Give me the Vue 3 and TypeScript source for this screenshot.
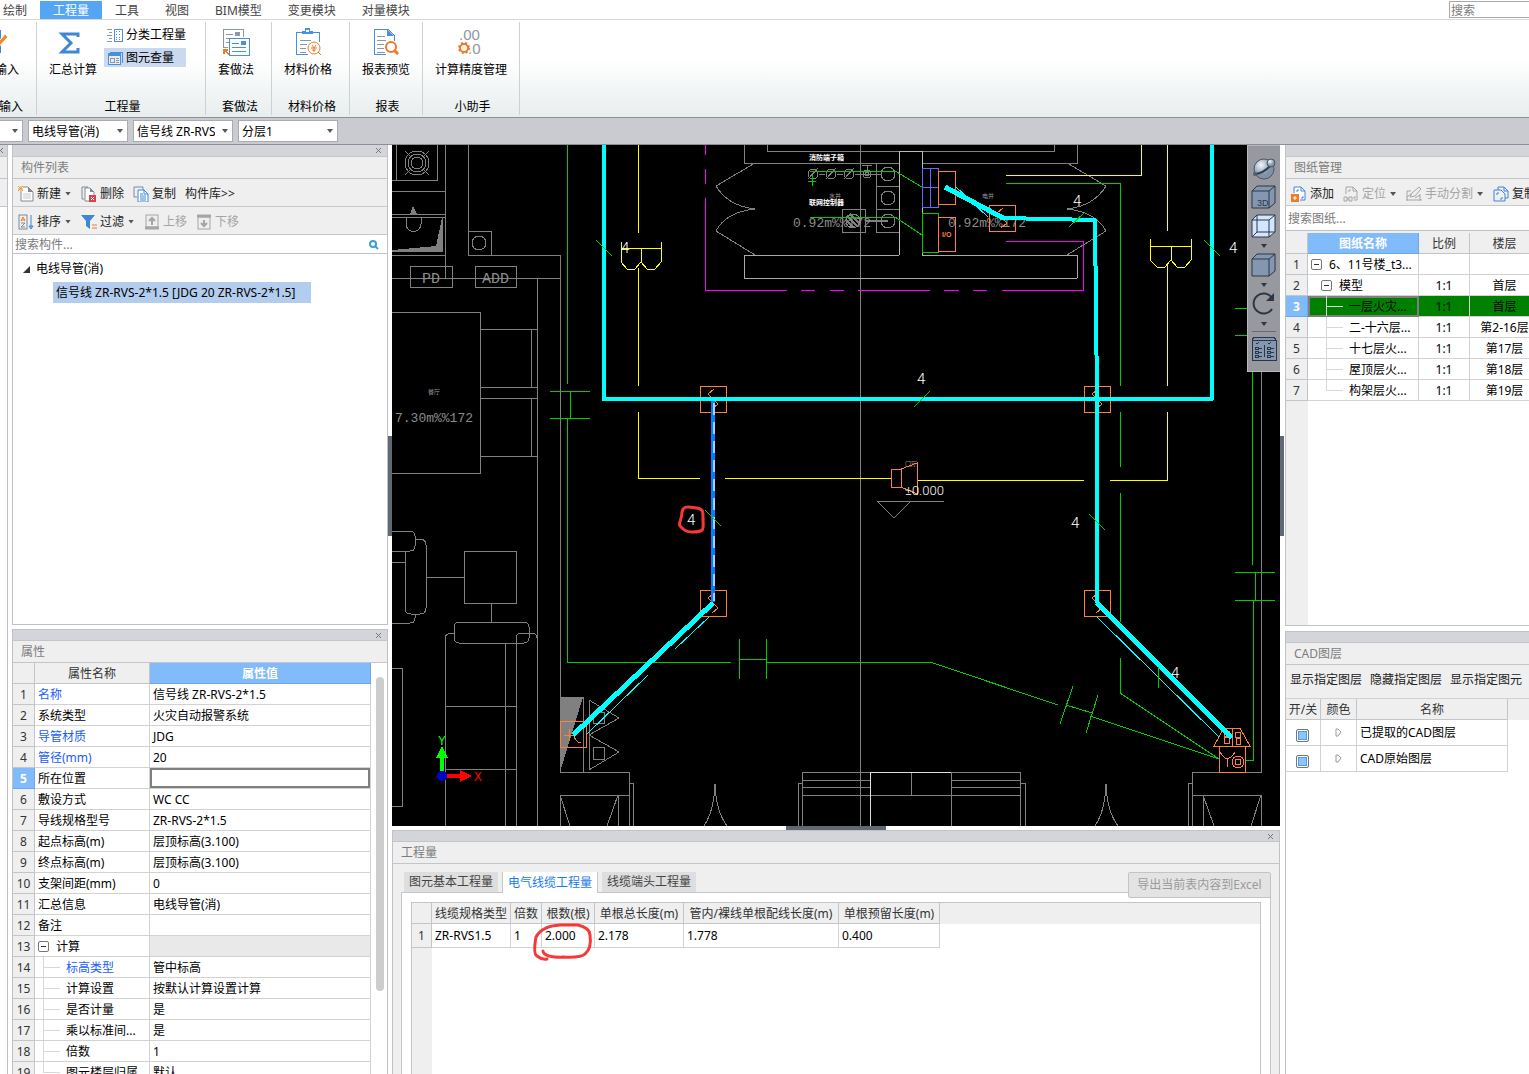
<script setup lang="ts">
import { ref } from 'vue'

interface PropertyRow {
  name: string
  value: string
  kind?: 'group' | 'leaf'
  blue?: boolean
}
interface DrawingRow {
  name: string
  scale: string
  floor: string
  depth: number
}

const menus = ['绘制', '工程量', '工具', '视图', 'BIM模型', '变更模块', '对量模块']
const activeMenu = ref('工程量')

const selectors = [
  { label: '构件类型', value: '电线导管(消)' },
  { label: '构件', value: '信号线 ZR-RVS-2*1.5' },
  { label: '分层', value: '分层1' },
]

const properties: PropertyRow[] = [
  { name: '名称', value: '信号线 ZR-RVS-2*1.5', blue: true },
  { name: '系统类型', value: '火灾自动报警系统' },
  { name: '导管材质', value: 'JDG', blue: true },
  { name: '管径(mm)', value: '20', blue: true },
  { name: '所在位置', value: '' },
  { name: '敷设方式', value: 'WC CC' },
  { name: '导线规格型号', value: 'ZR-RVS-2*1.5' },
  { name: '起点标高(m)', value: '层顶标高(3.100)' },
  { name: '终点标高(m)', value: '层顶标高(3.100)' },
  { name: '支架间距(mm)', value: '0' },
  { name: '汇总信息', value: '电线导管(消)' },
  { name: '备注', value: '' },
  { name: '计算', value: '', kind: 'group' },
  { name: '标高类型', value: '管中标高', kind: 'leaf', blue: true },
  { name: '计算设置', value: '按默认计算设置计算', kind: 'leaf' },
  { name: '是否计量', value: '是', kind: 'leaf' },
  { name: '乘以标准间...', value: '是', kind: 'leaf' },
  { name: '倍数', value: '1', kind: 'leaf' },
  { name: '图元楼层归属', value: '默认', kind: 'leaf' },
]
const selectedProperty = 4
const location = ref('')

const drawings: DrawingRow[] = [
  { name: '6、11号楼_t3...', scale: '', floor: '', depth: 0 },
  { name: '模型', scale: '1:1', floor: '首层', depth: 1 },
  { name: '一层火灾...', scale: '1:1', floor: '首层', depth: 2 },
  { name: '二-十六层...', scale: '1:1', floor: '第2-16层', depth: 2 },
  { name: '十七层火...', scale: '1:1', floor: '第17层', depth: 2 },
  { name: '屋顶层火...', scale: '1:1', floor: '第18层', depth: 2 },
  { name: '构架层火...', scale: '1:1', floor: '第19层', depth: 2 },
]

const layers = ['已提取的CAD图层', 'CAD原始图层']

const tabs = ['图元基本工程量', '电气线缆工程量', '线缆端头工程量']
const activeTab = ref('电气线缆工程量')
const quantityHeads = ['线缆规格类型', '倍数', '根数(根)', '单根总长度(m)', '管内/裸线单根配线长度(m)', '单根预留长度(m)']
const quantityRow = ['ZR-RVS1.5', '1', '2.000', '2.178', '1.778', '0.400']

// centres of the smoke detectors and anchors of the wire counts on the plan
const detectors = [[1002, 218], [713, 399], [1097, 399], [713, 603], [1097, 603]]
const wireCounts = [[1073, 206], [1229, 253], [621, 253], [917, 384], [687, 525], [1071, 528], [1171, 678]]
</script>

<template>
  <div class="app">
    <header class="menubar">
      <nav>
        <button v-for="m in menus" :key="m" :class="{ active: m === activeMenu }" @click="activeMenu = m">{{ m }}</button>
      </nav>
      <input class="menu-search" type="text" placeholder="搜索" aria-label="搜索" />
    </header>

    <div class="ribbon">
      <section class="group g-cut">
        <div class="group-body">
          <button class="big">
            <svg width="28" height="28" viewBox="0 0 28 28" fill="none"><path d="M4 3h15v21H4zM4 8h15" stroke="#3f87d6" stroke-width="2" /><path d="M4 3h15v4H4z" fill="#3f87d6" /><path d="M7 14h9M7 19h9" stroke="#3f87d6" /><path d="M13 19l2 3 12-13-3-3z" fill="#f08a24" stroke="#fff" /></svg>
            <span>表格输入</span>
          </button>
        </div>
        <div class="caption">表格输入</div>
      </section>
      <section class="group g-quantity">
        <div class="group-body">
          <button class="big">
            <svg width="28" height="28" viewBox="0 0 28 28" fill="none"><path d="M21 9V6H5l9 9-9 9h16v-4" stroke="#3f87d6" stroke-width="3" /></svg>
            <span>汇总计算</span>
          </button>
          <div class="small-list">
            <button class="small">
              <svg width="16" height="14" viewBox="0 0 16 14" shape-rendering="crispEdges" fill="none"><path d="M0 1h5M2 4h3M0 7h5M2 10h3M0 13h5" stroke="#8b97a5" /><rect x="7" y="1" width="8" height="12" stroke="#4a8fdc" /><path d="M9 3h1M12 3h1M9 6h1M12 6h1M9 9h1M12 9h1M9 11h1M12 11h1" stroke="#4a8fdc" /></svg>
              <span>分类工程量</span>
            </button>
            <button class="small on">
              <svg width="16" height="14" viewBox="0 0 16 14" shape-rendering="crispEdges" fill="none"><path d="M3 1h12v11" stroke="#4a8fdc" /><rect x="1" y="2" width="12" height="11" fill="#e6eef9" stroke="#4a8fdc" /><path d="M1 3h12" stroke="#4a8fdc" stroke-width="3" /><rect x="3" y="7" width="4" height="4" stroke="#8b97a5" /><path d="M9 7h3M9 9h3M9 11h3" stroke="#8b97a5" /></svg>
              <span>图元查量</span>
            </button>
          </div>
        </div>
        <div class="caption">工程量</div>
      </section>
      <section class="group g-method">
        <div class="group-body">
          <button class="big">
            <svg width="28" height="28" viewBox="0 0 28 28" fill="none" shape-rendering="crispEdges"><path d="M6 19H1V1h20v8" stroke="#8b97a5" /><path d="M4 6h7M4 10h4M4 14h3" stroke="#8b97a5" /><rect x="13" y="4" width="5" height="4" fill="#8b97a5" /><rect x="7" y="10" width="20" height="17" fill="#fff" stroke="#4a8fdc" /><path d="M10 15h7M10 19h14M10 23h14" stroke="#4a8fdc" /><rect x="19" y="13" width="5" height="4" fill="#4a8fdc" /><path d="M1 21h5v2H4l3 3-1 1-3-3v2H1z" fill="#f07a28" /></svg>
            <span>套做法</span>
          </button>
        </div>
        <div class="caption">套做法</div>
      </section>
      <section class="group g-price">
        <div class="group-body">
          <button class="big">
            <svg width="28" height="28" viewBox="0 0 28 28" fill="none"><g shape-rendering="crispEdges"><path d="M8 4H2v22h12M19 4h6v10" stroke="#4a8fdc" /><path d="M8 6h11V3h-3V0h-5v3H8z" fill="#4a8fdc" /><rect x="12" y="2" width="3" height="2" fill="#fff" /><path d="M6 12h11M6 16h7M6 20h6M6 24h6" stroke="#8b97a5" /></g><circle cx="20" cy="20" r="6" fill="#fff" stroke="#f07a28" /><path d="M18 17l2 3 2-3M20 20v4M17 20h6M18 22h4M24 24l3 3" stroke="#f07a28" /></svg>
            <span>材料价格</span>
          </button>
        </div>
        <div class="caption">材料价格</div>
      </section>
      <section class="group g-report">
        <div class="group-body">
          <button class="big">
            <svg width="28" height="28" viewBox="0 0 28 28" fill="none"><path d="M14 26H2V1h14l6 6v6" stroke="#4a8fdc" shape-rendering="crispEdges" /><path d="M15 1l7 7h-7z" fill="#4a8fdc" /><path d="M5 8h8M5 12h9M5 16h7M5 20h7M5 24h8" stroke="#8b97a5" shape-rendering="crispEdges" /><circle cx="19" cy="19" r="5" fill="#fff" stroke="#f07a28" stroke-width="2" /><path d="M22 22l4 4" stroke="#f07a28" stroke-width="3" /></svg>
            <span>报表预览</span>
          </button>
        </div>
        <div class="caption">报表</div>
      </section>
      <section class="group g-helper">
        <div class="group-body">
          <button class="big">
            <svg width="28" height="28" viewBox="0 0 28 28" fill="none"><text x="2" y="12" class="decimal">.00</text><text x="11" y="26" class="decimal">.0</text><circle cx="7" cy="20" r="4" stroke="#f07a28" stroke-width="2" /><circle cx="7" cy="20" r="5" stroke="#f07a28" stroke-width="2" stroke-dasharray="2 2" /></svg>
            <span>计算精度管理</span>
          </button>
        </div>
        <div class="caption">小助手</div>
      </section>
    </div>

    <div class="selectors">
      <label class="combo combo-cut"><select aria-label="楼层"><option></option></select><i class="caret"></i></label>
      <label v-for="s in selectors" :key="s.label" class="combo">
        <select :aria-label="s.label"><option>{{ s.value }}</option></select><i class="caret"></i>
      </label>
    </div>

    <main class="workspace">
      <aside class="sliver">
        <div class="strip"><button class="close" aria-label="关闭"><svg width="7" height="7" viewBox="0 0 7 7"><path d="M1 1l5 5M6 1L1 6" stroke="#777" stroke-width="1" /></svg></button></div>
        <div class="sliver-title"></div>
        <div class="sliver-bar"></div>
      </aside>

      <aside class="left">
        <section class="panel components">
          <div class="strip"><button class="close" aria-label="关闭"><svg width="7" height="7" viewBox="0 0 7 7"><path d="M1 1l5 5M6 1L1 6" stroke="#777" stroke-width="1" /></svg></button></div>
          <h2>构件列表</h2>
          <div class="toolbar">
            <button><svg width="16" height="16" viewBox="0 0 16 16" fill="none"><path d="M5 1h5l5 5v9H3V5" fill="#fff" stroke="#7f8b96" /><path d="M10 1l5 5h-5z" fill="#7f8b96" /><path d="M5 8h8M5 10h8M5 12h8" stroke="#c5cad0" /><path d="M0 0l5 5M5 0L0 5M3 0v5M0 3h5" stroke="#f39a2b" /></svg>新建<i class="caret"></i></button>
            <button><svg width="16" height="16" viewBox="0 0 16 16" fill="none"><path d="M3 13H1V1h6" stroke="#7f8b96" /><path d="M8 15H4V2h5l4 4v3" stroke="#7f8b96" fill="#fff" /><path d="M9 2l4 4H9z" fill="#7f8b96" /><rect x="8" y="9" width="7" height="7" fill="#d9434e" /><path d="M10 11l3 3M13 11l-3 3" stroke="#fff" /></svg>删除</button>
            <button><svg width="16" height="16" viewBox="0 0 16 16" fill="none"><path d="M4 11H1V1h9v3" stroke="#7f8b96" /><path d="M5 4h6l4 4v8H5z" stroke="#3f87d6" fill="#fff" /><path d="M11 4l4 4h-4zM7 8h3M7 10h6M7 12h6M7 14h6" stroke="#3f87d6" /></svg>复制</button>
            <button>构件库&gt;&gt;</button>
          </div>
          <div class="toolbar">
            <button><svg width="16" height="16" viewBox="0 0 16 16" fill="none"><rect x="1" y="1" width="8" height="14" stroke="#7f8b96" /><path d="M3 7l2-4 2 4M3 6h4" stroke="#f07a28" /><path d="M3 9h4l-4 4h4" stroke="#7f8b96" /><path d="M13 1v13M11 12l2 3 2-3z" stroke="#3f87d6" /></svg>排序<i class="caret"></i></button>
            <button><svg width="16" height="16" viewBox="0 0 16 16"><path d="M0 1h14L9 7v8l-4-3V7z" fill="#3f87d6" /><path d="M11 11h5M11 14h5" stroke="#f07a28" stroke-width="1" /></svg>过滤<i class="caret"></i></button>
            <button class="off" disabled><svg width="16" height="16" viewBox="0 0 16 16"><rect x="2" y="1" width="12" height="12" fill="none" stroke="#a5a5a5" /><path d="M1 14h14" stroke="#a5a5a5" stroke-width="3" /><path d="M8 11V5M5 7l3-3 3 3" fill="none" stroke="#a5a5a5" stroke-width="2" /></svg>上移</button>
            <button class="off" disabled><svg width="16" height="16" viewBox="0 0 16 16"><rect x="2" y="3" width="12" height="12" fill="none" stroke="#a5a5a5" /><path d="M1 2h14" stroke="#a5a5a5" stroke-width="3" /><path d="M8 6v6M5 9l3 3 3-3" fill="none" stroke="#a5a5a5" stroke-width="2" /></svg>下移</button>
          </div>
          <div class="search">
            <input type="text" placeholder="搜索构件..." aria-label="搜索构件" />
            <svg width="12" height="12" viewBox="0 0 12 12"><circle cx="5" cy="5" r="3" fill="none" stroke="#3aa0dc" stroke-width="2" /><path d="M7 7l3 3" stroke="#3aa0dc" stroke-width="2" /></svg>
          </div>
          <div class="tree">
            <div class="tree-root"><svg width="7" height="7" viewBox="0 0 7 7"><path d="M7 0v7H0z" fill="#333" /></svg>电线导管(消)</div>
            <div class="tree-item">信号线 ZR-RVS-2*1.5 [JDG 20 ZR-RVS-2*1.5]</div>
          </div>
        </section>

        <section class="panel props">
          <div class="strip"><button class="close" aria-label="关闭"><svg width="7" height="7" viewBox="0 0 7 7"><path d="M1 1l5 5M6 1L1 6" stroke="#777" stroke-width="1" /></svg></button></div>
          <h2>属性</h2>
          <div class="props-body">
            <table>
              <colgroup><col class="w-num" /><col class="w-name" /><col /></colgroup>
              <thead><tr><th></th><th>属性名称</th><th class="sel">属性值</th></tr></thead>
              <tbody>
                <tr v-for="(p, i) in properties" :key="p.name">
                  <th :class="{ sel: i === selectedProperty }">{{ i + 1 }}</th>
                  <td class="tree-cell" :class="{ blue: p.blue }">
                    <div class="cell">
                      <i v-if="p.kind === 'group'" class="minus"></i>
                      <i v-if="p.kind === 'leaf'" class="guide" :class="{ last: i === properties.length - 1 }"></i>
                      <span>{{ p.name }}</span>
                    </div>
                  </td>
                  <td v-if="i === selectedProperty" class="editing"><input v-model="location" type="text" aria-label="所在位置" /></td>
                  <td v-else :class="{ shade: p.kind === 'group' }">{{ p.value }}</td>
                </tr>
              </tbody>
            </table>
            <div class="scroll"><div class="thumb"></div></div>
          </div>
        </section>
      </aside>

      <div class="splitter"><i class="grip"></i></div>

      <div class="center">
        <div class="canvas">
          <svg class="plan" viewBox="392 145 888 681" preserveAspectRatio="xMinYMin slice" fill="none" shape-rendering="crispEdges">
            <!-- walls, furniture and fittings -->
            <g stroke="#808080">
              <path d="M396 145v35M437 145v36M392 180h45M392 191h53M445 145v133M392 214h53M392 217h53M442 218v34M392 255h53M468 145v110h92v517M468 231h23v24M392 278h168M537 278v548" />
              <path d="M410 266h42v21h-42zM475 266h41v21h-41z" />
              <path d="M392 312h88v161h-88M480 329h57M480 387h57M531 329v58M480 398h57M480 456h57M531 398v58" />
              <path d="M406 218v6a7 7 0 0 0 15 0v-6" />
              <circle cx="417" cy="163" r="12" /><circle cx="417" cy="163" r="9" /><circle cx="417" cy="163" r="6" />
              <path d="M405 151l6 6M429 151l-6 6M405 175l6-6M429 175l-6-6" />
              <circle cx="479" cy="243" r="7" />
              <path d="M860 145v681" />
              <path d="M744 145v18h155M922 163h155v-18M767 145v6h287v-6" />
              <path d="M744 255h155M922 255h155M744 278h333M744 255v23M1077 255v23" stroke="#aaa" />
              <path d="M899 255V151h23v104" stroke="#bbb" />
              <path d="M755 163l-39 23Q728 206 755 209Q726 212 716 231l39 24M1067 163l39 23Q1094 206 1067 209Q1096 212 1106 231l-39 24" />
              <path d="M876 163v69h23M876 186h23M876 209h23M842 209h23v23h-23z" />
              <circle cx="888" cy="174" r="7" /><circle cx="888" cy="198" r="7" /><circle cx="888" cy="221" r="7" />
              <circle cx="813" cy="174" r="5" /><circle cx="831" cy="174" r="5" /><circle cx="849" cy="174" r="5" />
              <path d="M808 179l10-11M826 179l10-11M844 179l10-11M819 174h6M837 174h6M855 174h26M867 165v6M862 165h10" />
              <circle cx="867" cy="174" r="4" /><circle cx="867" cy="174" r="2" />
              <circle cx="853" cy="221" r="7" /><path d="M847 216l11 11M850 214l10 10M846 220l8 8M865 221h23" stroke-width="2" />
              <path d="M877 501h67M877 501l17 17 17-17" />
              <!-- armchair, side table and sofa -->
              <path d="M392 531h18q5 0 5 5v10q0 5-5 5h-18M415 539h5q6 0 6 6v63q0 6-6 6h-9q-6 0-6-6v-57M392 562h13M415 614v4q0 5-5 5h-18M426 577h38M464 551h52v52h-52zM491 603v19" />
              <rect x="454" y="622" width="75" height="21" rx="5" />
              <path d="M445 826V638q0-5 9-5M516 826V638q0-5 5-5h11q5 0 5 5M505 643v183M445 706h71M445 769h71M392 668h10v138h-10" />
              <path d="M560 697h23v75M589 700v70l30-18-30-17 30-17zM593 712h11v11h-11zM593 747h11v12h-11z" />
              <path d="M560 772h69v54M629 783h4v43M560 795h69M560 795v31M560 795l10 31M618 795v31M618 795l-11 31" />
              <path d="M715 784q-1 27-11 42M715 784q1 27 12 42M1106 784q-1 27-11 42M1106 784q1 27 12 42" />
              <path d="M802 826v-54h218v54M802 783h-4v43M1020 783h5v43M802 780h68M802 787h68M802 795h218M951 780h69M951 787h69M911 772v23M951 772v54" />
              <path d="M870 826v-54h81" stroke="#ddd" />
              <path d="M1261 372v400h-69v54M1192 783h-4v43M1192 795h69v31M1203 795v31M1203 795l11 31M1261 795l-10 31" />
            </g>
            <g fill="#808080">
              <path d="M413 206l4 8h-7zM442 218v34h-50v-2l44-4zM560 697h23l-23 75z" />
            </g>
            <g class="cad-text" fill="#8c8c8c">
              <text x="422" y="283" class="room">PD</text><text x="482" y="283" class="room">ADD</text>
              <text x="395" y="422">7.30m%%172</text>
              <text x="793" y="227">0.92m%%172</text><text x="948" y="227">0.92m%%172</text>
            </g>
            <g class="tiny" fill="#999">
              <text x="428" y="394">餐厅</text><text x="829" y="198">水井</text><text x="982" y="198">电井</text><text x="905" y="466">门厅</text>
            </g>

            <!-- fire hydrant zone boundary -->
            <path stroke="#f0f" d="M705 145v10M705 169v15M705 198v92h82M801 290h14M830 290h14M858 290h72M944 290h15M973 290h14M1002 290h81v-49h-77" />

            <!-- broadcast circuit -->
            <g stroke="#ff0">
              <path d="M638 145v88M638 268v118M638 412v66h62M725 478h166M917 480h167M1110 480h57v-68M1167 386v-121M1167 231v-86M1006 175h135v-30" />
              <path d="M621 242v20l6 7h8l6-7 6 7h8l6-7v-20M621 248h40M641 248v14M1150 239v21l7 7h8l6-7 6 7h8l6-7v-21M1150 246h41M1171 246v14" />
            </g>

            <!-- power and telephone circuits -->
            <g stroke="#0c0">
              <path d="M567 145v239M550 391h40M570 391v27M550 418h40M567 418v244h164M739 639v40M766 639v40M740 659h26M766 662h164l128 43M1073 686l-13 38M1098 695l-12 38M1066 705l26 8M1090 716l129 43" />
              <path d="M1006 183h114v203M1120 412v55M1120 493v129M1120 658v35l99 66" />
              <path d="M1235 308h12M1235 335h12M1252 372v193M1235 572h40M1255 572v28M1235 600h40M1253 600v160h-8" />
              <path d="M810 171h85l27 16M810 217h85l27 18M812 175v11M808 181h8M922 213h16v39h-16z" />
            </g>

            <path stroke="#66f" d="M922 168h16v39h-16zM930 168v39M922 187h16" />
            <g stroke="#ff7f3f">
              <path d="M938 171h17v33h-17zM938 217h17v34h-17zM891 469h10v18h-10zM901 469l16-6v31l-16-7" />
              <g v-for="([x, y], i) in detectors" :key="i">
                <rect :x="x - 13" :y="y - 13" width="26" height="26" />
                <polyline :points="`${x + 1},${y - 10} ${x - 5},${y - 5} ${x + 5},${y + 5} ${x - 1},${y + 10}`" />
              </g>
              <path d="M560 721h26v26h-26zM569 729v12M564 735h10M574 735q1 7 7 8M577 728l5-3" />
              <path d="M1214 746l10-18h16l10 18zM1232 728v18M1219 746h26v26h-26zM1224 737h5v6h-5zM1236 738h4v6h-4zM1220 752q7 13 15 0M1227 758v9" />
              <circle cx="1227" cy="734" r="3" /><circle cx="1238" cy="735" r="3" /><circle cx="1238" cy="762" r="6" /><circle cx="1238" cy="762" r="3" />
            </g>
            <text x="942" y="237" class="io" fill="#ff7f3f">I/O</text>

            <!-- cable runs -->
            <g stroke="#0ff">
              <path stroke-width="4" stroke-linejoin="round" d="M604 145v254h608V145M945 187l58 31 92 2 2 179v204" />
              <path stroke-width="5" d="M1097 603l135 135M713 603L573 735M945 187l58 31" />
              <path d="M955 186l33 31M709 617l-34 32M648 675l-61 59M1097 617l122 120" />
            </g>
            <path d="M713 401v201" stroke="#0080ff" stroke-width="4" />
            <path d="M714 403v198" stroke="#a8d0ff" stroke-width="2" stroke-dasharray="12 7" />
            <path stroke="#0c0" d="M596 240l16 16M914 407l16-16M705 510l16 16M1069 227l16-15M1204 240l16 16M1089 514l16 16M1158 667v21" />

            <g class="count" fill="#fff">
              <text v-for="([x, y], i) in wireCounts" :key="i" :x="x" :y="y">4</text>
            </g>
            <text x="905" y="495" class="level" fill="#fff">±0.000</text>
            <g class="label" fill="#fff"><text x="809" y="160">消防端子箱</text><text x="809" y="205">联网控制器</text></g>

            <!-- coordinate axes -->
            <path d="M440 757h4v17h-4zM442 746l6 12h-12z" fill="#0f0" />
            <path d="M444 774h16v4h-16zM472 776l-12 6v-12z" fill="#f00" />
            <circle cx="442" cy="776" r="5" fill="#00c" />
            <text x="438" y="745" class="axis" fill="#0f0">Y</text><text x="474" y="781" class="axis" fill="#f00">X</text>

            <path class="mark" d="M682 512C683 505 690 507 697 508C704 509 703 513 703 520C704 531 703 532 692 532C686 532 684 530 680 526C678 523 682 520 682 512z" />
          </svg>

          <div class="view-tools">
            <button aria-label="动态观察"><svg width="24" height="24" viewBox="1 1 24 24"><defs><radialGradient id="ball" cx="35%" cy="30%"><stop offset="0" stop-color="#f4f8fd" /><stop offset="1" stop-color="#7f93ab" /></radialGradient></defs><circle cx="13" cy="14" r="10" fill="url(#ball)" stroke="#4a5566" /><path d="M3 19q9 0 17-9" fill="none" stroke="#333d4b" stroke-width="2" /><circle cx="20" cy="8" r="4" fill="url(#ball)" stroke="#4a5566" /><circle cx="4" cy="19" r="2" fill="#555e6b" /></svg></button>
            <button aria-label="三维视图"><svg width="24" height="24" viewBox="1 1 24 24"><path d="M1 7l5-5h18v17l-6 5H1z" fill="#8497b0" stroke="#2c3644" /><path d="M1 7h17v17M18 7l6-5" fill="none" stroke="#2c3644" /><text x="6" y="22" class="three">3D</text></svg></button>
            <button aria-label="俯视"><svg width="24" height="24" viewBox="1 1 24 24"><path d="M1 7l5-5h18v17l-6 5H1z" fill="#d3e6ff" stroke="#2c3644" /><path d="M1 7h17v17M18 7l6-5M6 2v17h18M6 19l-5 5" fill="none" stroke="#2c3644" /></svg></button>
            <i class="caret"></i>
            <button aria-label="实体显示"><svg width="24" height="24" viewBox="1 1 24 24"><path d="M1 7l5-5h18v17l-6 5H1z" fill="#8497b0" stroke="#2c3644" /><path d="M1 7h17v17M18 7l6-5" fill="none" stroke="#2c3644" /></svg></button>
            <i class="caret"></i>
            <button aria-label="旋转"><svg width="24" height="24" viewBox="1 1 24 24"><path d="M21 18A10 10 0 1 1 21 7" fill="none" stroke="#2c3644" stroke-width="2" /><path d="M23 2v8h-8z" fill="#2c3644" /></svg></button>
            <i class="caret"></i>
            <hr />
            <button aria-label="显示设置"><svg width="24" height="24" viewBox="1 1 24 24" fill="none" shape-rendering="crispEdges"><path d="M1 4l2-3h20l2 3v20H1z" fill="#8497b0" stroke="#2c3644" /><path d="M1 4h24M13 9v12M8 12h3M8 16h3M8 20h3M20 12h3M20 16h3M20 20h3" stroke="#2c3644" /><path d="M4 11h3v2H4zM4 15h3v2H4zM4 19h3v2H4zM16 11h3v2h-3zM16 15h3v2h-3zM16 19h3v2h-3zM5 7l1 1 2-2M17 7l1 1 2-2" stroke="#2c3644" /></svg></button>
          </div>
        </div>

        <div class="h-splitter"><i class="h-grip"></i></div>

        <section class="panel quantities">
          <div class="strip"><button class="close" aria-label="关闭"><svg width="7" height="7" viewBox="0 0 7 7"><path d="M1 1l5 5M6 1L1 6" stroke="#777" stroke-width="1" /></svg></button></div>
          <h2>工程量</h2>
          <div class="q-body">
            <div class="tab-row">
              <button v-for="t in tabs" :key="t" class="tab" :class="{ active: t === activeTab }" @click="activeTab = t">{{ t }}</button>
              <button class="export" disabled>导出当前表内容到Excel</button>
            </div>
            <div class="q-page">
              <div class="q-grid">
                <table>
                  <colgroup><col class="c0" /><col class="c1" /><col class="c2" /><col class="c3" /><col class="c4" /><col class="c5" /><col class="c6" /><col /></colgroup>
                  <thead><tr><th></th><th v-for="h in quantityHeads" :key="h">{{ h }}</th><th class="fill"></th></tr></thead>
                  <tbody><tr><th>1</th><td v-for="(v, i) in quantityRow" :key="i">{{ v }}</td><td class="fill"></td></tr></tbody>
                </table>
                <div class="gutter"></div>
                <svg class="q-mark" width="190" height="70" viewBox="0 0 190 70"><path class="mark" d="M132 48q0 3 6 5q8 2 14 1q18 1 22-3q7-6 5-19q0-7-12-10h-18q-18 1-24 12q-3 17 1 19q5 4 10 3" /></svg>
              </div>
            </div>
          </div>
        </section>
      </div>

      <div class="splitter splitter-right"><i class="grip"></i></div>

      <aside class="right">
        <section class="panel drawings">
          <div class="strip"></div>
          <h2>图纸管理</h2>
          <div class="toolbar">
            <button><svg width="16" height="16" viewBox="0 0 16 16" fill="none"><path d="M3 7V1h7l4 4v9H9" fill="#fff" stroke="#3f87d6" /><path d="M10 1v4h4M6 6V4h2M12 10v2h-2" stroke="#3f87d6" /><rect x="0" y="8" width="8" height="8" fill="#f07a28" /><path d="M4 10v4M2 12h4" stroke="#fff" /></svg>添加</button>
            <button class="off" disabled><svg width="16" height="16" viewBox="0 0 16 16" fill="none" stroke="#a5a5a5"><path d="M3 8V1h7l4 4v9h-3M10 1v4h4M6 6V4h2M12 10v2h-2M1 11h3v4H1zM6 11h3v4H6zM4 13h2" /></svg>定位<i class="caret"></i></button>
            <button class="off" disabled><svg width="16" height="16" viewBox="0 0 16 16" fill="none" stroke="#a5a5a5"><path d="M1 5h4M1 5v9h13V8M4 11l2-4 7-6 2 2-6 7zM1 11l4-3M9 12l5-3M0 14h2M13 14h3" /></svg>手动分割<i class="caret"></i></button>
            <button><svg width="16" height="16" viewBox="0 0 16 16" fill="none" stroke="#3f87d6"><path d="M5 4V1h6l4 4v7h-3M1 4h7l4 4v7H1zM4 9V7h2M9 11v2H7M11 1v4h4" /></svg>复制</button>
          </div>
          <div class="search"><input type="text" placeholder="搜索图纸..." aria-label="搜索图纸" /></div>
          <div class="grid-area">
            <table>
              <colgroup><col class="d0" /><col class="d1" /><col class="d2" /><col class="d3" /></colgroup>
              <thead><tr><th></th><th class="sel">图纸名称</th><th>比例</th><th>楼层</th></tr></thead>
              <tbody>
                <tr v-for="(d, i) in drawings" :key="d.name" :class="{ current: i === 2 }">
                  <th :class="{ sel: i === 2 }">{{ i + 1 }}</th>
                  <td class="tree-cell">
                    <div class="cell" :class="`depth-${d.depth}`">
                      <i v-if="d.depth < 2" class="minus"></i>
                      <i v-else class="guide" :class="{ last: i === drawings.length - 1 }"></i>
                      <span>{{ d.name }}</span>
                    </div>
                  </td>
                  <td class="mid">{{ d.scale }}</td>
                  <td class="mid">{{ d.floor }}</td>
                </tr>
              </tbody>
            </table>
            <div class="gutter"></div>
          </div>
        </section>

        <section class="panel cad-layers">
          <div class="strip"></div>
          <h2>CAD图层</h2>
          <div class="layer-tools"><button>显示指定图层</button><button>隐藏指定图层</button><button>显示指定图元</button></div>
          <div class="layer-area">
            <table>
              <colgroup><col class="l0" /><col class="l1" /><col class="l2" /><col /></colgroup>
              <thead><tr><th>开/关</th><th>颜色</th><th>名称</th><th class="fill"></th></tr></thead>
              <tbody>
                <tr v-for="l in layers" :key="l">
                  <td class="check"><input type="checkbox" checked :aria-label="l" /></td>
                  <td class="mid"><svg width="7" height="9" viewBox="0 0 7 9"><path d="M1 1h2l3 3-3 4H1z" fill="none" stroke="#999" /></svg></td>
                  <td class="layer-name">{{ l }}</td>
                  <td class="fill"></td>
                </tr>
              </tbody>
            </table>
          </div>
        </section>
      </aside>
    </main>
  </div>
</template>

<style>
html, body { margin: 0; overflow: hidden; }
</style>

<style scoped>
.app, .app * { box-sizing: border-box; }
.app {
  display: flex; flex-direction: column; height: 100vh; overflow: hidden;
  font: 12px/16px "Noto Sans", "Noto Sans CJK SC", sans-serif; color: #000; background: #fff;
}
button, input, select { font: inherit; color: inherit; }
button { border: 0; background: none; padding: 0; white-space: nowrap; }
input { border: 0; outline: 0; padding: 0; background: #fff; min-width: 0; }
input::placeholder { color: #7a7a7a; opacity: 1; }
svg { display: block; flex: none; }
h2 { margin: 0; font-size: 12px; font-weight: 400; }

.menubar { display: flex; justify-content: space-between; height: 20px; padding-top: 1px; border-bottom: 1px solid #d8d8d8; }
.menubar nav { display: flex; padding-left: 1px; }
.menubar nav button { padding: 2px 13px 0; color: #444; }
.menubar nav button:first-child { padding-left: 2px; }
.menubar nav button.active { background: #55a5f5; color: #fff; }
.menu-search { width: 80px; height: 17px; border: 1px solid #aaa; border-right: 0; padding: 1px 0 0 1px; }

.ribbon { display: flex; height: 97px; padding: 2px 0 2px; background: linear-gradient(#fff 40%, #e8eded); }
.group { display: flex; flex-direction: column; justify-content: space-between; border-right: 1px solid #cdd1d4; overflow: hidden; flex: none; }
.group-body { display: flex; justify-content: center; padding-top: 6px; }
.caption { text-align: center; padding-left: 3px; }
.big { display: flex; flex-direction: column; align-items: center; gap: 6px; }
.g-cut { width: 37px; }
.g-cut .group-body { justify-content: flex-end; padding-right: 17px; }
.g-cut .big { align-items: flex-end; }
.g-cut .big svg { margin-right: 10px; }
.g-cut .caption { display: flex; justify-content: flex-end; padding-right: 13px; white-space: nowrap; }
.g-quantity { width: 169px; }
.g-quantity .group-body { justify-content: flex-start; gap: 7px; padding-left: 12px; }
.g-quantity .big svg { margin-right: 4px; }
.g-method { width: 66px; }
.g-method .group-body, .g-price .group-body { padding-right: 5px; }
.g-price { width: 78px; }
.g-report { width: 73px; }
.g-helper { width: 97px; }
.small-list { display: flex; flex-direction: column; gap: 4px; margin-top: -3px; }
.small { display: flex; align-items: center; gap: 3px; height: 19px; width: 82px; padding-left: 3px; }
.small.on { background: #c9d9ef; }
.decimal { font: 15px "Liberation Sans", sans-serif; fill: #8b97a5; }

.selectors { display: flex; align-items: center; gap: 5px; height: 28px; background: #c9cbd0; border-top: 1px solid #8c9096; border-bottom: 1px solid #8c9096; }
.combo { position: relative; width: 100px; height: 22px; }
.combo-cut { width: 23px; }
.combo select { appearance: none; width: 100%; height: 100%; border: 1px solid #a9abaf; border-radius: 0; background: #fff; padding: 1px 17px 0 3px; overflow: hidden; }
.combo-cut select { border-left: 0; }
.combo .caret { position: absolute; right: 4px; top: 9px; }
.caret { display: inline-block; flex: none; width: 8px; height: 4px; background: #555; clip-path: polygon(1px 0, 7px 0, 50% 100%); }

.workspace { display: flex; flex: 1; min-height: 0; }
.strip { display: flex; justify-content: flex-end; align-items: center; flex: none; height: 12px; background: #d4d5da; border-bottom: 1px solid #c4c5cb; padding-right: 5px; }
.sliver { width: 8px; border-right: 1px solid #c0c2c8; margin-right: 4px; flex: none; overflow: hidden; }
.sliver .strip { justify-content: flex-start; padding: 0; }
.sliver .close { margin-left: -3px; }
.sliver-title { height: 22px; background: #efefef; border-bottom: 1px solid #c4c5cb; }
.sliver-bar { height: 28px; background: #efefef; border-bottom: 1px solid #c4c5cb; }
.left { display: flex; flex-direction: column; gap: 4px; width: 376px; flex: none; }
.panel { display: flex; flex-direction: column; border: 1px solid #c0c2c8; border-top: 0; overflow: hidden; }
.panel h2 { flex: none; height: 22px; padding: 3px 8px; color: #7d7d7d; background: #efefef; border-bottom: 1px solid #c4c5cb; }
.components { height: 480px; flex: none; }
.toolbar { display: flex; align-items: center; gap: 9px; height: 28px; flex: none; padding: 2px 0 0 5px; background: #efefef; border-bottom: 1px solid #c8c9ce; color: #222; }
.toolbar button { display: flex; align-items: center; gap: 3px; }
.toolbar .off { color: #a5a5a5; }
.search { display: flex; align-items: center; height: 19px; flex: none; border-bottom: 1px solid #c0c2c8; padding: 1px 7px 0 2px; }
.search input { flex: 1; }
.tree { padding-top: 7px; }
.tree-root { display: flex; align-items: center; gap: 6px; padding-left: 10px; }
.tree-item { width: 258px; white-space: nowrap; margin: 5px 0 0 40px; padding: 3px 3px 2px; background: #b3cdee; }

.props { flex: 1; border-top: 1px solid #c0c2c8; border-bottom: 0; }
.props .strip { height: 11px; }
.props-body { display: flex; min-height: 0; overflow: hidden; }
table { border-collapse: separate; border-spacing: 0; table-layout: fixed; width: 100%; }
th, td { height: 21px; padding: 2px 0 0 3px; border-right: 1px solid #d2d2d2; border-bottom: 1px solid #d2d2d2; text-align: left; white-space: nowrap; overflow: hidden; font-weight: 400; line-height: 18px; }
th { background: #efefef; color: #333; text-align: center; padding: 2px 0 0; border-color: #c4c5c9; }
td.tree-cell { padding-top: 0; }
.props-body table { width: 358px; flex: none; }
.w-num { width: 22px; }
.w-name { width: 115px; }
th.sel { background: #81bbfb; color: #fff; font-weight: 700; border-color: #6aa8ec; }
.blue { color: #1a5cff; }
.shade { background: #e9e9e9; }
.cell { display: flex; align-items: center; height: 20px; }
.cell span { padding-top: 2px; }
.minus { position: relative; flex: none; width: 11px; height: 11px; border: 1px solid #777; border-radius: 2px; margin-right: 7px; background: #fff; }
.minus::after { content: ""; position: absolute; left: 2px; right: 2px; top: 4px; height: 1px; background: #333; }
.guide { position: relative; flex: none; width: 17px; height: 20px; margin: 0 6px 0 5px; }
.guide::before { content: ""; position: absolute; left: 0; top: 0; height: 20px; border-left: 1px solid #d8d8d8; }
.guide.last::before { height: 10px; }
.guide::after { content: ""; position: absolute; left: 0; top: 10px; width: 17px; border-top: 1px solid #d8d8d8; }
td.editing { padding: 0; }
.editing input { display: block; width: 100%; height: 20px; border: 2px solid #7f7f7f; }
.scroll { flex: 1; padding: 14px 3px 0 5px; }
.thumb { height: 314px; border-radius: 4px; background: #cdcdcd; }

.splitter { width: 4px; flex: none; display: flex; flex-direction: column; padding-top: 291px; }
.splitter-right { width: 5px; padding-right: 1px; }
.grip { height: 100px; background: #5f6873; }
.center { display: flex; flex-direction: column; flex: 1; min-width: 0; }
.canvas { position: relative; flex: 1; min-height: 0; background: #000; overflow: hidden; }
.plan { width: 100%; height: 100%; }
.cad-text { font: 13px "Liberation Mono", monospace; }
.room { font-size: 15px; }
.count { font: 300 15px Roboto, sans-serif; }
.level { font: 300 13px Roboto, sans-serif; }
.tiny { font: 6px "Noto Sans CJK SC", sans-serif; }
.label { font: bold 7px "Noto Sans CJK SC", sans-serif; }
.io { font: bold 7px "Liberation Sans", sans-serif; }
.axis { font: 13px "Liberation Mono", monospace; }
.mark { fill: none; stroke: #f83838; stroke-width: 3; stroke-linecap: round; stroke-linejoin: round; shape-rendering: auto; }
.view-tools { position: absolute; top: 0; right: 0; width: 33px; height: 227px; padding: 10px 2px 0; display: flex; flex-direction: column; align-items: center; gap: 5px; background: #97999e; border: 1px solid #b5b7bb; border-right: 0; }
.view-tools svg { overflow: visible; }
.view-tools .caret { background: #2c3644; margin-top: 1px; }
.view-tools hr { width: 24px; margin: 0; border: 0; border-top: 1px solid #666a70; }
.three { font: 9px "Liberation Sans", sans-serif; fill: #2c3644; }

.h-splitter { height: 4px; flex: none; display: flex; justify-content: center; }
.h-grip { width: 100px; background: #5f6873; }
.quantities { height: 244px; flex: none; border-top: 1px solid #c0c2c8; border-bottom: 0; background: #efefef; }
.quantities .strip { height: 11px; }
.q-body { flex: 1; display: flex; flex-direction: column; padding: 8px 8px 0; }
.tab-row { display: flex; gap: 4px; height: 20px; padding-left: 3px; position: relative; flex: none; }
.tab { padding: 0 5px; background: #dedede; color: #444; }
.tab.active { height: 21px; background: #fff; color: #1a7bea; border: solid #c4c5c9; border-width: 0 1px; z-index: 1; }
.export { align-self: flex-start; margin-left: auto; flex: none; width: 143px; height: 26px; border: 1px solid #c3c3c3; border-radius: 2px; background: #e3e3e3; color: #9b9b9b; z-index: 1; }
.q-page { flex: 1; display: flex; padding: 9px 9px 0; background: #fff; border: 1px solid #c4c5c9; border-bottom: 0; }
.q-grid { position: relative; flex: 1; display: flex; flex-direction: column; border: 1px solid #c4c5c9; border-bottom: 0; }
.q-grid tbody th, .q-grid tbody td { height: 24px; padding-top: 0; }
.c0 { width: 20px; }
.c1 { width: 79px; }
.c2 { width: 31px; }
.c3 { width: 53px; }
.c4 { width: 89px; }
.c5 { width: 155px; }
.c6 { width: 101px; }
.q-mark { position: absolute; left: -1px; top: 0; }
.gutter { flex: 1; width: 20px; background: #efefef; }
.fill { border-right: 0; }
thead .fill { border-bottom: 0; }
td.fill { border-bottom: 0; }

.right { display: flex; flex-direction: column; gap: 5px; width: 244px; flex: none; }
.drawings { height: 481px; border-right: 0; flex: none; }
.drawings .toolbar { height: 27px; padding-top: 4px; }
.drawings .search { height: 25px; }
.grid-area { flex: 1; display: flex; flex-direction: column; border-top: 2px solid #efefef; }
.grid-area table { width: 254px; }
.grid-area .gutter { width: 22px; }
.d0 { width: 22px; }
.d1 { width: 111px; }
.d2 { width: 51px; }
.d3 { width: 70px; }
.mid { text-align: center; padding: 2px 0 0; }
.mid svg { margin: 0 auto 2px; }
.depth-1 { padding-left: 10px; }
.depth-2 { padding-left: 10px; }
.current td { background: #008000; }
.current td:nth-child(2) { outline: 2px solid #7f7f7f; outline-offset: -2px; }
.cad-layers { flex: 1; border-top: 1px solid #c0c2c8; border-right: 0; border-bottom: 0; }
.cad-layers .strip { height: 11px; }
.layer-tools { display: flex; gap: 8px; height: 34px; flex: none; padding: 0 0 4px 4px; background: #efefef; color: #222; border-bottom: 1px solid #d2d2d2; }
.layer-area td { height: 26px; }
td.layer-name { padding-top: 0; }
.layer-area thead th { height: 21px; }
.l0 { width: 35px; }
.l1 { width: 36px; }
.l2 { width: 151px; }
td.check { padding: 5px 0 0 10px; }
.check input { appearance: none; display: block; width: 13px; height: 13px; margin: 0; border: 1px solid #777; border-radius: 2px; background: #8fc3fb; box-shadow: inset 0 0 0 1px #fff, inset 0 0 0 2px #4a9bf5; }
</style>
